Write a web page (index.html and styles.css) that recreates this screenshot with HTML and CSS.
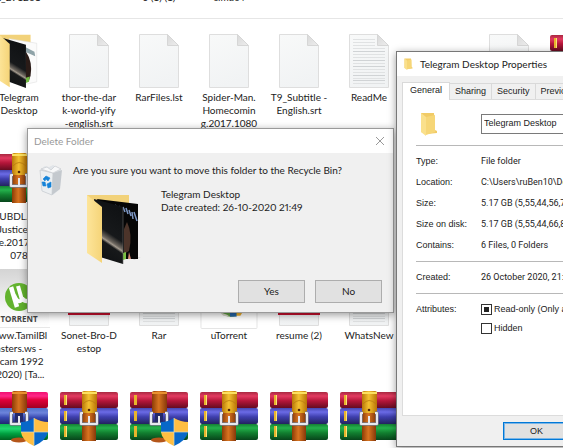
FILE: index.html
```html
<!DOCTYPE html>
<html lang="en">
<head>
<meta charset="utf-8">
<title>Delete Folder</title>
<link rel="stylesheet" href="styles.css">
</head>
<body>
<svg class="defs" aria-hidden="true">
  <defs>
    <linearGradient id="red" x2="0" y2="1"><stop offset="0" stop-color="#a82840"/><stop offset=".25" stop-color="#e23a60"/><stop offset=".55" stop-color="#b5163a"/><stop offset="1" stop-color="#650c20"/></linearGradient>
    <linearGradient id="blue" x2="0" y2="1"><stop offset="0" stop-color="#4646b0"/><stop offset=".25" stop-color="#6b6be6"/><stop offset=".55" stop-color="#3f3fae"/><stop offset="1" stop-color="#23235f"/></linearGradient>
    <linearGradient id="green" x2="0" y2="1"><stop offset="0" stop-color="#158034"/><stop offset=".25" stop-color="#24b24c"/><stop offset=".55" stop-color="#128030"/><stop offset="1" stop-color="#07451b"/></linearGradient>
    <linearGradient id="pink" x2="0" y2="1"><stop offset="0" stop-color="#f01070"/><stop offset=".25" stop-color="#ff2888"/><stop offset=".5" stop-color="#e00038"/><stop offset="1" stop-color="#a00020"/></linearGradient>
    <linearGradient id="sky" x2="0" y2="1"><stop offset="0" stop-color="#5070c8"/><stop offset=".3" stop-color="#6c84dc"/><stop offset=".6" stop-color="#3848b0"/><stop offset="1" stop-color="#202870"/></linearGradient>
    <linearGradient id="lime" x2="0" y2="1"><stop offset="0" stop-color="#10b850"/><stop offset=".3" stop-color="#20d870"/><stop offset=".6" stop-color="#00a040"/><stop offset="1" stop-color="#006020"/></linearGradient>
    <linearGradient id="gold"><stop offset="0" stop-color="#b87808"/><stop offset=".45" stop-color="#f4c030"/><stop offset="1" stop-color="#b87406"/></linearGradient>
    <linearGradient id="leather"><stop offset="0" stop-color="#8c3c06"/><stop offset=".45" stop-color="#d87420"/><stop offset="1" stop-color="#86380a"/></linearGradient>
    <linearGradient id="page" x2=".3" y2="1"><stop offset="0" stop-color="#f8f9f9"/><stop offset="1" stop-color="#f1f3f4"/></linearGradient>
    <linearGradient id="fold" x2="1" y2="1"><stop offset="0" stop-color="#d8d8d8"/><stop offset="1" stop-color="#eeeeee"/></linearGradient>
    <linearGradient id="flap"><stop offset="0" stop-color="#fde59a"/><stop offset="1" stop-color="#f5d478"/></linearGradient>
    <linearGradient id="tile" x2="0" y2="1"><stop offset="0" stop-color="#d4d4d4"/><stop offset=".75" stop-color="#fafafa"/><stop offset="1" stop-color="#ffffff"/></linearGradient>
    <linearGradient id="beam" x1=".3" y1="0" x2="0" y2="1"><stop offset="0" stop-color="#101214"/><stop offset=".42" stop-color="#17191b"/><stop offset=".52" stop-color="#6d675f"/><stop offset=".55" stop-color="#a39a8e"/><stop offset=".59" stop-color="#17191a"/><stop offset="1" stop-color="#0c0e10"/></linearGradient>

    <symbol id="open-buckle" viewBox="0 0 20 15">
      <path d="M4 2H2v11H18V2H16" fill="none" stroke="#777b88" stroke-width="3.4" stroke-linejoin="round"/>
      <path d="M4 2H2v11H18V2H16" fill="none" stroke="#e6e8ee" stroke-width="2" stroke-linejoin="round"/>
      <path d="M10 5v7" stroke="#e8e8ec" stroke-width="2"/>
    </symbol>
    <symbol id="rar" viewBox="0 0 58 50">
      <rect y="1" width="58" height="16" rx="2" fill="url(#red)"/>
      <rect y="17" width="58" height="16" rx="2" fill="url(#blue)"/>
      <rect y="33" width="58" height="16" rx="2" fill="url(#green)"/>
      <path d="M4 4h3v10H4zM4 20h3v10H4zM4 35h3v11H4z" fill="#e8b42c"/>
      <path d="M6 4h1v10H6zM6 20h1v10H6zM6 35h1v11H6z" fill="#fbe27a"/>
      <rect x="22" y="16" width="14" height="34" fill="url(#leather)"/>
      <rect x="22" y="0" width="15" height="22" rx="2" fill="url(#gold)"/>
      <path d="M23 13q6-7 13 0" fill="none" stroke="#b87a10" stroke-width=".8"/>
      <path d="M22 2h15" stroke="#fbe060" stroke-width="2"/>
      <circle cx="29" cy="19" r="1.300" fill="#53280a"/>
      <use href="#open-buckle" x="19" y="20" width="20" height="15"/>
    </symbol>
    <symbol id="rar-app" viewBox="0 0 58 55">
      <rect y="1" width="58" height="16" rx="2" fill="url(#red)"/>
      <rect y="17" width="58" height="16" rx="2" fill="url(#blue)"/>
      <rect y="33" width="58" height="16" rx="2" fill="url(#green)"/>
      <path d="M4 4h3v10H4zM4 20h3v10H4zM4 35h3v11H4z" fill="#e8b42c"/>
      <ellipse cx="29" cy="49" rx="8" ry="2.500" fill="#b4561a"/>
      <rect x="22" y="0" width="15" height="22" rx="2" fill="url(#leather)"/>
      <path d="M22 2h15" stroke="#e89030" stroke-width="2"/>
      <path d="M25 22h8v11h-8z" fill="#252a68"/>
      <use href="#open-buckle" x="19" y="20" width="20" height="15"/>
      <use href="#shield" x="31" y="27" width="27" height="28"/>
    </symbol>
    <symbol id="rar-sfx" viewBox="0 0 58 55">
      <rect y="1" width="58" height="16" rx="2" fill="url(#pink)"/>
      <rect y="17" width="58" height="16" rx="2" fill="url(#sky)"/>
      <rect y="33" width="58" height="16" rx="2" fill="url(#lime)"/>
      <ellipse cx="29" cy="49" rx="8" ry="2.500" fill="#b4561a"/>
      <rect x="22" y="0" width="15" height="22" rx="2" fill="url(#leather)"/>
      <path d="M22 2h15" stroke="#e89030" stroke-width="2"/>
      <path d="M25 22h8v11h-8z" fill="#252a68"/>
      <use href="#open-buckle" x="19" y="20" width="20" height="15"/>
      <use href="#shield" x="31" y="27" width="27" height="28"/>
    </symbol>
    <symbol id="shield" viewBox="0 0 27 28">
      <path d="M13 0Q7 4 0 4V14H13z" fill="#0868c8"/>
      <path d="M13 0Q20 4 27 4V14H13z" fill="#ffbe42"/>
      <path d="M0 14Q1 23 13 28V14z" fill="#ffbe42"/>
      <path d="M27 14Q25 23 13 28V14z" fill="#0868c8"/>
      <path d="M0 14H27M13 0V28" stroke="#d8dcc0" stroke-width=".7"/>
    </symbol>
    <symbol id="doc" viewBox="0 0 40 54">
      <path d="M.5.5H28.500L39.500 11.500V53.500H.5z" fill="url(#page)" stroke="#dedede"/>
      <path d="M28.500.5V11.500H39.500z" fill="url(#fold)" stroke="#d6d6d6"/>
    </symbol>
    <symbol id="text-doc" viewBox="0 0 40 54">
      <use href="#doc" width="40" height="54"/>
      <path d="M4 5.500H26M4 8.500H26M4 11.500H26M4 14.500H36M4 20.500H36M4 23.500H36M4 29.500H36M4 35.500H36M4 38.500H36M4 44.500H36M4 49.500H36" stroke="#e0e2e3"/>
      <path d="M4 17.500H36M4 26.500H36M4 32.500H36M4 41.500H36M4 46.500H36" stroke="#d0d3d5"/>
    </symbol>
    <symbol id="pdf" viewBox="0 0 42 54">
      <use href="#doc" x="1" width="40" height="54"/>
      <path d="M0 22H42V43H0z" fill="#c8102e"/>
    </symbol>
    <symbol id="folder-light" viewBox="0 0 54 70">
      <path d="M1 1H42V52H1z" fill="#f2d27a"/>
      <path d="M14 6 50 12V62L32 66z" fill="#fbfbfb" stroke="#dddddd" stroke-width=".7"/>
      <path d="M35 17 47 23 48 29 35 23z" fill="#8fa3a8"/>
      <path d="M36 23Q45 36 42 54L40 60 34 62z" fill="#2a1b17"/>
      <path d="M35 57 41 55 40 62 35 64z" fill="#72b843"/>
      <path d="M5 5 36 14V70L14 62z" fill="url(#beam)"/>
      <path d="M1 1 5 4 15 13V69L1 60z" fill="url(#flap)"/>
    </symbol>
    <symbol id="folder-dark" viewBox="0 0 54 70">
      <path d="M45 64 54 63 47 66z" fill="#d0d0d0"/>
      <path d="M0 1H42V52H0z" fill="#f2d27a"/>
      <path d="M10 5 51 10V65L36 65z" fill="#060606"/>
      <path d="M28 11 30 14M32 12 34 16M36 13 38 18M39 14 41 20M42 16 44 22M45 18 46 25M47 18 50 27" stroke="#7d97c4" stroke-width="1.500"/>
      <path d="M40 28Q46 40 42 57L37 60V35z" fill="#4c342a"/>
      <path d="M36 59 39 58V65L36 66z" fill="#7cc242"/>
      <path d="M42 58 44 65H41z" fill="#d58a76"/>
      <path d="M7 5 36 13V70L13 63z" fill="url(#beam)"/>
      <path d="M36 13V70" stroke="#6a6a6a" stroke-width=".6"/>
      <path d="M0 1 15 13 15 69 0 59z" fill="url(#flap)"/>
    </symbol>
    <symbol id="folder" viewBox="0 0 18 24">
      <path d="M1 1 14 1 15 18 17 19 17 21 7 22 1 20z" fill="#f1cb66"/>
      <path d="M1 1 6 5V24L1 20z" fill="#fae08c"/>
      <path d="M6 5 15 3V20L6 23z" fill="#f6d677"/>
    </symbol>
    <symbol id="torrent" viewBox="0 0 70 60">
      <rect x="3" y="0" width="62" height="60" rx="8" fill="url(#tile)"/>
      <path d="M5 58.500H66" stroke="#e8e8e8"/>
      <circle cx="35" cy="28" r="14" fill="#63b32e"/>
      <path d="M27 18 33 38" fill="none" stroke="#ffffff" stroke-width="4.500"/>
      <path d="M30 26Q33 35 38 31L34 17M38 29Q41 34 47 31" fill="none" stroke="#ffffff" stroke-width="4"/>
      <text x="35" y="53" text-anchor="middle" class="torrent-name">TORRENT</text>
    </symbol>
    <symbol id="setup" viewBox="0 0 60 60">
      <rect x=".5" y=".5" width="59" height="59" rx="1" fill="#ffffff" stroke="#e4e4e4"/>
      <circle cx="32" cy="32" r="15" fill="#5f9f42"/>
      <path d="M20 42 28 45 31 47 24 46z" fill="#d8d8c8"/>
      <path d="M31 41H38V47H31z" fill="#2464a8"/><path d="M38 41H45L42 46H38z" fill="#efaf2a"/>
    </symbol>
  </defs>
</svg>

<main class="desktop">
  <section class="explorer">
    <div class="files files-above">
      <div class="file"><span>t_291201</span></div><div class="file"></div>
      <div class="file"><span>o (1) (1)</span></div><div class="file"><span>cimuc4</span></div>
    </div>
    <div class="files">
      <div class="file"><svg class="art folder-art"><use href="#folder-light"/></svg><span>Telegram<br>Desktop</span></div>
      <div class="file"><svg class="art doc-art"><use href="#doc"/></svg><span>thor-the-dar<br>k-world-yify<br>-english.srt</span></div>
      <div class="file"><svg class="art doc-art"><use href="#doc"/></svg><span>RarFiles.lst</span></div>
      <div class="file"><svg class="art doc-art"><use href="#doc"/></svg><span>Spider-Man.<br>Homecomin<br>g.2017.1080</span></div>
      <div class="file"><svg class="art doc-art"><use href="#doc"/></svg><span>T9_Subtitle -<br>English.srt</span></div>
      <div class="file"><svg class="art doc-art"><use href="#text-doc"/></svg><span>ReadMe</span></div>
      <div class="file"></div>
      <div class="file"><svg class="art doc-art"><use href="#doc"/></svg></div>
      <div class="file"><svg class="art rar-art"><use href="#rar"/></svg></div>

      <div class="file"><svg class="art rar-art"><use href="#rar"/></svg><span>UBDL.co<br>Justice.Le<br>ague.2017.1080<br>078</span></div>
      <div class="file"></div><div class="file"></div><div class="file"></div><div class="file"></div>
      <div class="file"></div><div class="file"></div><div class="file"></div><div class="file"></div>

      <div class="file"><svg class="art torrent-art"><use href="#torrent"/></svg><span>www.TamilBl<br>asters.ws -<br>Scam 1992<br>(2020) [Ta...</span></div>
      <div class="file"><svg class="art pdf-art"><use href="#pdf"/></svg><span>Sonet-Bro-D<br>estop</span></div>
      <div class="file"><svg class="art doc-art"><use href="#text-doc"/></svg><span>Rar</span></div>
      <div class="file"><svg class="art setup-art"><use href="#setup"/></svg><span>uTorrent</span></div>
      <div class="file"><svg class="art pdf-art"><use href="#pdf"/></svg><span>resume (2)</span></div>
      <div class="file"><svg class="art doc-art"><use href="#text-doc"/></svg><span>WhatsNew</span></div>
      <div class="file"></div><div class="file"></div><div class="file"></div>

      <div class="file"><svg class="art app-art"><use href="#rar-sfx"/></svg></div>
      <div class="file"><svg class="art rar-art"><use href="#rar"/></svg></div>
      <div class="file"><svg class="art app-art"><use href="#rar-app"/></svg></div>
      <div class="file"><svg class="art rar-art"><use href="#rar"/></svg></div>
      <div class="file"><svg class="art rar-art"><use href="#rar"/></svg></div>
      <div class="file"><svg class="art rar-art"><use href="#rar"/></svg></div>
    </div>
  </section>

  <section class="window confirm" role="dialog" aria-labelledby="confirm-title">
    <header class="titlebar">
      <h2 id="confirm-title">Delete Folder</h2>
      <button class="close" aria-label="Close"><svg viewBox="0 0 10 10"><path d="M1 1 9 9M9 1 1 9"/></svg></button>
    </header>
    <div class="confirm-body">
      <svg class="bin" viewBox="0 0 24 32">
        <path d="M2 5 6 2 10 3 14 1 18 3 22 5 21 25 14 31 3 27z" fill="#e1e5e9"/>
        <path d="M1 6 14 9 13 31 3 27z" fill="#eceff1" stroke="#c4c9ce" stroke-width=".7"/>
        <path d="M14 9 23 6 21 25 13 31z" fill="#c4c9ce"/>
        <path d="M2 5 8 3 12 6 16 2 22 5 14 9z" fill="#f7f8f9" stroke="#c8ccd0" stroke-width=".7"/>
        <path d="M4 15 7 12 11 14 9 17 7 15 6 17zM3 18 6 18 7 22 4 22zM8 20 12 18 12 23 9 24z" fill="#1683d8" stroke="#1683d8" stroke-width=".6"/>
      </svg>
      <div class="confirm-main">
        <p>Are you sure you want to move this folder to the Recycle Bin?</p>
        <div class="subject">
          <svg class="subject-art"><use href="#folder-dark"/></svg>
          <p>Telegram Desktop<br>Date created: 26-10-2020 21:49</p>
        </div>
      </div>
    </div>
    <footer class="confirm-actions"><button class="push">Yes</button><button class="push">No</button></footer>
  </section>

  <section class="window properties" role="dialog" aria-labelledby="properties-title">
    <header class="titlebar">
      <svg class="title-icon"><use href="#folder"/></svg>
      <h2 id="properties-title">Telegram Desktop Properties</h2>
    </header>
    <div class="properties-body">
      <div class="tabs" role="tablist">
        <button class="tab active" role="tab" aria-selected="true">General</button><button class="tab" role="tab">Sharing</button><button class="tab" role="tab">Security</button><button class="tab" role="tab">Previous Versions</button>
      </div>
      <div class="panel">
        <div class="name-row">
          <svg class="name-icon"><use href="#folder"/></svg>
          <input class="name" type="text" value="Telegram Desktop" aria-label="Folder name">
        </div>
        <dl class="facts">
          <dt>Type:</dt><dd>File folder</dd>
          <dt>Location:</dt><dd>C:\Users\ruBen10\Downloads</dd>
          <dt>Size:</dt><dd>5.17 GB (5,55,44,56,700 bytes)</dd>
          <dt>Size on disk:</dt><dd>5.17 GB (5,55,44,66,816 bytes)</dd>
          <dt>Contains:</dt><dd>6 Files, 0 Folders</dd>
        </dl>
        <dl class="facts"><dt>Created:</dt><dd>26 October 2020, 21:49:00</dd></dl>
        <div class="attributes">
          <span>Attributes:</span>
          <div class="checks">
            <label><input class="mixed" type="checkbox" aria-checked="mixed">Read-only (Only applies to files in folder)</label>
            <label><input type="checkbox">Hidden</label>
          </div>
        </div>
      </div>
      <footer class="properties-actions"><button class="push default">OK</button></footer>
    </div>
  </section>
</main>
</body>
</html>
```
FILE: styles.css
```css
* { box-sizing: border-box; }
body {
  margin: 0;
  background: #ffffff;
  color: #222222;
  font: 10px/13px Lato, "Open Sans", sans-serif;
}
h2, p, dl, dd { margin: 0; }
h2 { font-size: 10px; font-weight: 400; }
button, input { font: inherit; color: inherit; }
.defs { position: absolute; width: 0; height: 0; }

.desktop { position: relative; height: 100vh; overflow: hidden; }

/* File icons */
.files {
  display: grid;
  grid-template-columns: repeat(9, 70px);
  grid-auto-rows: 119px;
  margin: 15px 0 0 -16px;
}
.files-above {
  grid-auto-rows: 27px;
  margin-top: -9px;
  border-bottom: 1px solid #e6e6e6;
}
.file {
  display: flex;
  flex-direction: column;
  align-items: center;
  text-align: center;
  white-space: nowrap;
}
.file span { display: flow-root; }
.art { flex: none; margin-bottom: 3px; }
.doc-art { width: 40px; height: 54px; }
.pdf-art { width: 42px; height: 54px; }
.folder-art { width: 54px; height: 54px; }
.rar-art { width: 58px; height: 50px; margin-bottom: 7px; }
.app-art { width: 58px; height: 55px; }
.torrent-art { width: 70px; height: 60px; margin: -3px 0 0; }
.setup-art { width: 60px; height: 57px; margin-bottom: 0; }
.torrent-name { font: 700 8px "Open Sans", sans-serif; fill: #444444; }

/* Windows */
.window {
  position: absolute;
  background: #f0f0f0;
  border: 1px solid #9a9a9a;
  box-shadow: 0 2px 8px rgba(0, 0, 0, .4);
}
.titlebar {
  display: flex;
  align-items: center;
  height: 24px;
  padding: 0 8px 0 6px;
  background: #ffffff;
}
.push {
  width: 67px;
  height: 23px;
  padding: 0;
  background: #e1e1e1;
  border: 1px solid #adadad;
}

.confirm { left: 27px; top: 128px; width: 367px; }
.confirm .titlebar { justify-content: space-between; color: #999999; }
.close { display: flex; width: 10px; height: 10px; padding: 0; background: none; border: 0; }
.close svg { width: 10px; height: 10px; fill: none; stroke: #999999; }
.confirm-body { display: flex; gap: 10px; padding: 11px 11px 0; }
.bin { flex: none; width: 24px; height: 32px; }
.subject { display: flex; gap: 20px; margin: 11px 0 0 14px; font-variant-numeric: proportional-nums; }
.subject-art { width: 54px; height: 70px; margin-top: 6px; }
.confirm-actions {
  display: flex;
  justify-content: flex-end;
  gap: 10px;
  padding: 16px 11px 9px;
}

.properties {
  left: 396px;
  top: 51px;
  width: 320px;
  border-color: #777777;
  font-family: "Liberation Sans", Arial, sans-serif;
  font-size: 9px;
}
.properties .titlebar { gap: 6px; font-family: Lato, "Open Sans", sans-serif; }
.title-icon { width: 11px; height: 12px; }
.properties-body { padding: 6px 5px; }
.tabs { display: flex; align-items: flex-end; }
.tab {
  height: 16px;
  padding: 0 5px;
  background: #f0f0f0;
  border: 1px solid #d9d9d9;
  border-width: 1px 1px 0 0;
}
.tab.active {
  height: 18px;
  margin-bottom: -1px;
  padding: 0 7px 2px;
  background: #ffffff;
  border-left-width: 1px;
  position: relative;
}
.panel {
  height: 317px;
  padding: 12px 13px;
  background: #ffffff;
  border: 1px solid #dcdcdc;
}
.name-row { display: flex; align-items: center; gap: 43px; padding: 0 0 9px 4px; }
.name-icon { flex: none; width: 18px; height: 24px; }
.name { flex: 1; min-width: 0; height: 20px; padding: 0 2px 3px; background: #ffffff; border: 1px solid #7a7a7a; }
.facts {
  display: grid;
  grid-template-columns: 65px 1fr;
  padding: 5px 0;
  border-top: 1px solid #b8b8b8;
  line-height: 21px;
  white-space: nowrap;
}
.facts dd { font-family: Roboto, sans-serif; }
.attributes {
  display: grid;
  grid-template-columns: 65px 1fr;
  padding-top: 9px;
  border-top: 1px solid #b8b8b8;
  white-space: nowrap;
}
.checks { display: flex; flex-direction: column; gap: 6px; }
.checks label { display: flex; align-items: center; gap: 2px; }
.checks input {
  appearance: none;
  width: 11px;
  height: 11px;
  margin: 0;
  background: #ffffff;
  border: 1px solid #333333;
}
.checks .mixed { padding: 2px; background: #222222 content-box; }
.properties-actions { padding: 6px 0 0 101px; }
.default { height: 18px; border: 1px solid #0078d7; outline: 1px solid #7ab5e6; outline-offset: -2px; }
```
